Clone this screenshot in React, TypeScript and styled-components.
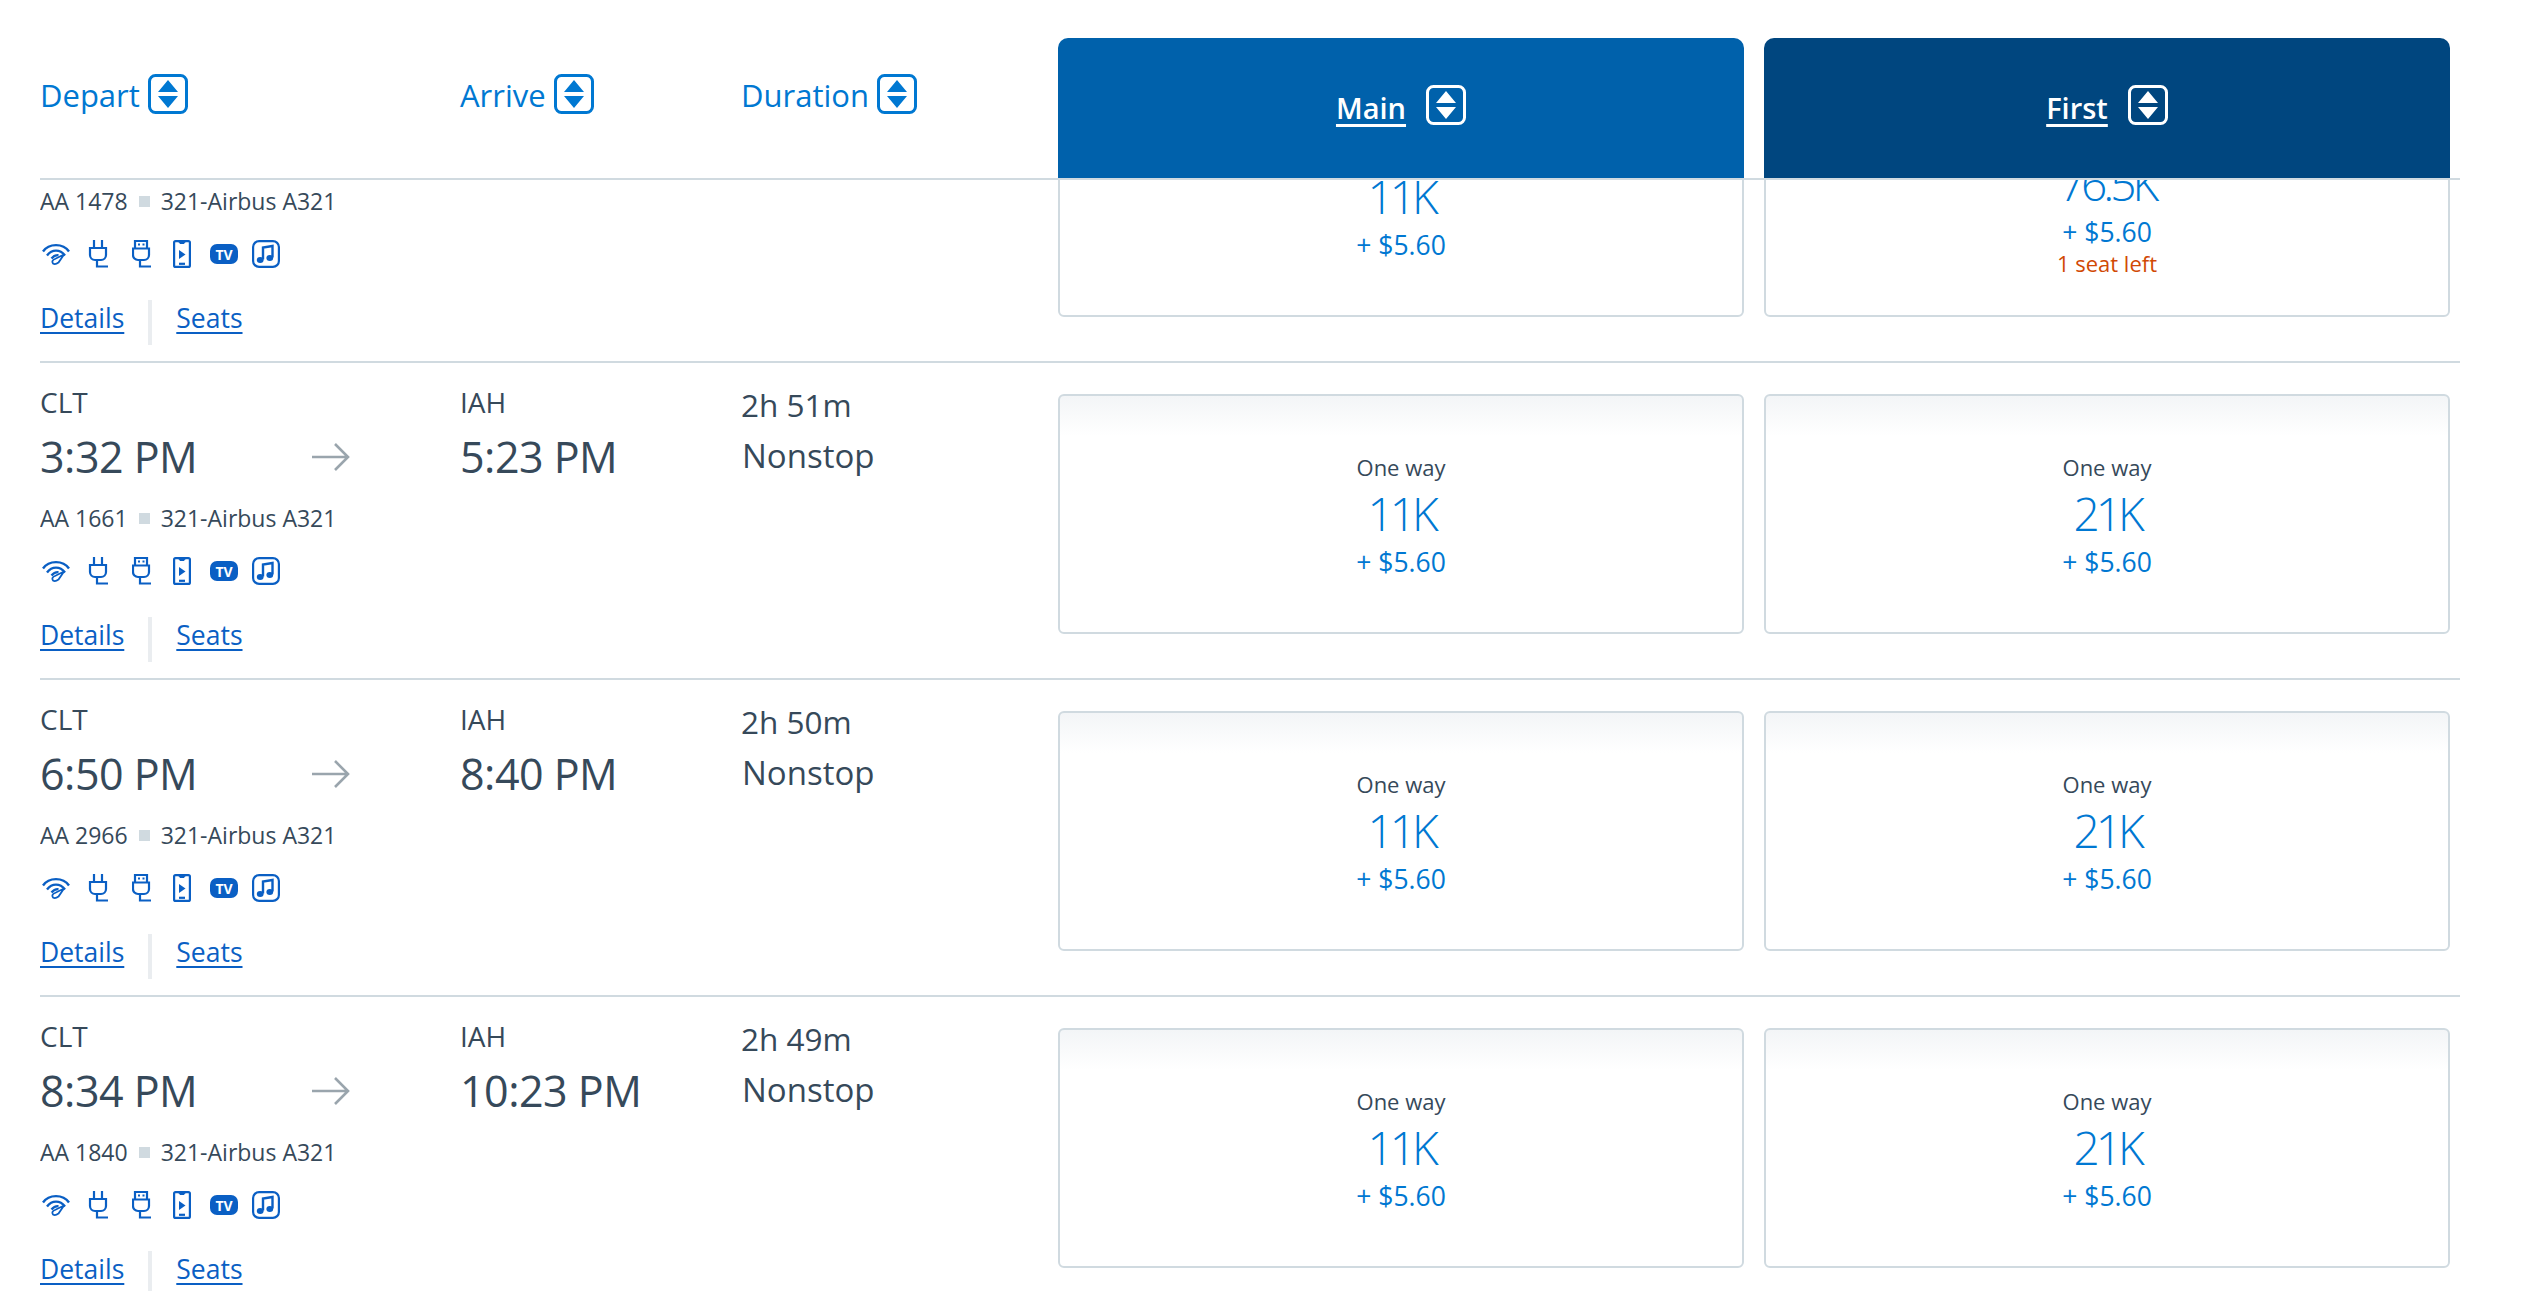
import styled, { createGlobalStyle } from 'styled-components'

const GlobalStyle = createGlobalStyle`
  html, body {
    margin: 0;
    padding: 0;
    background: #fff;
    font-family: "Open Sans", "Noto Sans", sans-serif;
    color: #36495a;
  }
`

const Page = styled.div`
  width: 2420px;
  height: 1291px;
  margin-left: 40px;
  overflow: hidden;
`

const Header = styled.div`
  display: flex;
  height: 180px;
  box-sizing: border-box;
  border-bottom: 2px solid #d0dae0;
`

const HeaderCol = styled.div<{ $width: number }>`
  display: flex;
  align-items: flex-start;
  gap: 8px;
  width: ${p => p.$width}px;
  padding-top: 74px;
  box-sizing: border-box;
  font-size: 31px;
  line-height: 42px;
  color: #0078d2;
`

const FareGroup = styled.div`
  display: flex;
  gap: 20px;
  align-items: flex-start;
`

const FareHeader = styled.div<{ $dark?: boolean }>`
  display: flex;
  align-items: center;
  justify-content: center;
  gap: 20px;
  width: 686px;
  height: 140px;
  margin-top: 38px;
  padding-bottom: 6px;
  box-sizing: border-box;
  border-radius: 10px 10px 0 0;
  background: ${p => (p.$dark ? '#00467f' : '#0061ab')};
  color: #fff;
`

const FareTitle = styled.span`
  font-size: 29px;
  font-weight: 600;
  line-height: 40px;
  margin-top: 6px;
  text-decoration: underline;
  text-decoration-thickness: 3px;
  text-underline-offset: 5px;
`

const Viewport = styled.div`
  height: 1111px;
  overflow: hidden;
`

const FlightRow = styled.div<{ $clipped?: boolean }>`
  display: flex;
  height: 317px;
  box-sizing: border-box;
  border-bottom: 2px solid #d0dae0;
  margin-top: ${p => (p.$clipped ? '-134px' : '0')};
`

const DepartCol = styled.div`
  width: 420px;
  padding-top: 21px;
  box-sizing: border-box;
`

const ArriveCol = styled.div`
  width: 281px;
  padding-top: 21px;
  box-sizing: border-box;
`

const DurationCol = styled.div`
  width: 317px;
  padding-top: 22px;
  box-sizing: border-box;
`

const Airport = styled.div`
  height: 36px;
  font-size: 28px;
  line-height: 36px;
`

const TimeRow = styled.div`
  display: grid;
  grid-template-columns: 272px auto;
  align-items: center;
  margin-top: 9px;
  height: 56px;
`

const Time = styled.div`
  font-size: 43px;
  line-height: 56px;
  letter-spacing: -0.5px;
  white-space: nowrap;
`

const ArriveTime = styled(Time)`
  margin-top: 9px;
`

const FlightInfo = styled.div`
  display: flex;
  align-items: center;
  gap: 11px;
  margin-top: 17px;
  font-size: 23px;
  line-height: 32px;
`

const Dot = styled.span`
  width: 11px;
  height: 11px;
  background: #d0dae0;
`

const Amenities = styled.div`
  display: flex;
  align-items: center;
  height: 28px;
  margin-top: 23px;
  color: #0a5fc4;
`

const TvBadge = styled.span`
  display: flex;
  align-items: center;
  justify-content: center;
  width: 28px;
  height: 20px;
  margin: 0 14px 0 19px;
  border-radius: 7px;
  background: #0a5fc4;
  color: #fff;
  font-size: 14px;
  font-weight: 700;
`

const Links = styled.div`
  display: flex;
  align-items: flex-start;
  height: 45px;
  margin-top: 32px;
`

const LinkText = styled.a`
  font-size: 26.5px;
  line-height: 36px;
  color: #0a5fc4;
  text-decoration: underline;
  text-decoration-thickness: 2px;
  text-underline-offset: 4px;
`

const LinkDivider = styled.span`
  width: 4px;
  height: 45px;
  margin: 0 24px;
  background: #eaedf0;
`

const DurationText = styled.div`
  height: 40px;
  font-size: 31.5px;
  line-height: 40px;
`

const StopsText = styled(DurationText)`
  margin-top: 11px;
  margin-left: 1px;
  font-size: 33px;
`

const FareCard = styled.div`
  display: flex;
  flex-direction: column;
  align-items: center;
  justify-content: center;
  width: 686px;
  height: 240px;
  margin-top: 31px;
  padding-top: 3px;
  box-sizing: border-box;
  border: 2px solid #d0dae0;
  border-radius: 6px;
  background: linear-gradient(#f3f5f7, #fff 40px);
`

const OneWay = styled.div`
  height: 30px;
  font-size: 22px;
  line-height: 30px;
`

const Miles = styled.div`
  font-size: 46px;
  font-weight: 300;
  line-height: 52px;
  letter-spacing: -4px;
  margin-top: 5px;
  color: #0078d2;
`

const Taxes = styled.div`
  font-size: 26.5px;
  line-height: 36px;
  margin-top: 5px;
  color: #0078d2;
`

const SeatsLeft = styled.div`
  font-size: 22px;
  line-height: 26px;
  color: #d14904;
`

function SortIcon() {
  return (
    <svg width="40" height="40" viewBox="0 0 40 40" style={{ flex: 'none' }}>
      <rect x="1.5" y="1.5" width="37" height="37" rx="6" fill="none" stroke="currentColor" strokeWidth="3" />
      <path d="M20 6 L30 18 H10 Z M10 22 H30 L20 34 Z" fill="currentColor" />
    </svg>
  )
}

function WifiIcon() {
  return (
    <svg width="28" height="22" viewBox="0 0 28 22" fill="none" stroke="currentColor" strokeWidth="2.4" style={{ marginLeft: 2 }}>
      <path d="M1 8.5 C7 0 21 0 27 8.5" />
      <path d="M5 12.5 C10 6 18 6 23 12.5" />
      <path d="M9.5 15.5 C11.5 13 14 12 16.5 12.2" />
      <path d="M11 20.5 C9.5 18.5 11 16.5 13 16 L22 11.5 L16.5 19.5 C14.5 21 12.5 21.5 11 20.5 Z" strokeWidth="1.8" />
    </svg>
  )
}

function PlugIcon() {
  return (
    <svg width="21" height="28" viewBox="0 0 21 28" fill="none" stroke="currentColor" strokeWidth="2.2" style={{ marginLeft: 18 }}>
      <path d="M6 0 V7 M14 0 V7" />
      <path d="M2 8 H18 V15 A5 5 0 0 1 13 20 H7 A5 5 0 0 1 2 15 Z" />
      <path d="M9 20 V26.5 H20" />
    </svg>
  )
}

function UsbIcon() {
  return (
    <svg width="19" height="28" viewBox="0 0 19 28" fill="none" stroke="currentColor" strokeWidth="2.2" style={{ marginLeft: 23 }}>
      <path d="M3 8 V1 H15 V8" />
      <path d="M6 4.5 H8 M10.5 4.5 H12.5" />
      <path d="M1 8.5 H17 V15 A5 5 0 0 1 12 20 H6 A5 5 0 0 1 1 15 Z" />
      <path d="M8 20 V26.5 H19" />
    </svg>
  )
}

function PhoneIcon() {
  return (
    <svg width="18" height="28" viewBox="0 0 18 28" fill="none" stroke="currentColor" strokeWidth="2.2" style={{ marginLeft: 22 }}>
      <rect x="1.1" y="1.1" width="15.8" height="25.8" rx="1.5" />
      <path d="M5.5 1.5 H12.5 L11 3.5 H7 Z" fill="currentColor" strokeWidth="1" />
      <path d="M6 10 L12.5 14.5 L6 19 Z" fill="currentColor" stroke="none" />
      <path d="M6 23.8 H12" />
    </svg>
  )
}

function MusicIcon() {
  return (
    <svg width="28" height="28" viewBox="0 0 28 28" fill="none" stroke="currentColor" strokeWidth="2.2">
      <rect x="1.1" y="1.1" width="25.8" height="25.8" rx="6" />
      <path d="M11 19.5 V7.5 L20.5 6 V17.5" strokeWidth="2.4" />
      <ellipse cx="8.2" cy="20" rx="3.4" ry="2.9" fill="currentColor" stroke="none" />
      <ellipse cx="17.8" cy="18" rx="3.4" ry="2.9" fill="currentColor" stroke="none" />
    </svg>
  )
}

function ArrowIcon() {
  return (
    <svg width="38" height="28" viewBox="0 0 38 28" fill="none" stroke="#9aa5ad" strokeWidth="2.6">
      <path d="M0 14 H36 M23 1 L36 14 L23 27" />
    </svg>
  )
}

interface Fare {
  miles: string
  label?: string
  seats?: string
}

interface Flight {
  from?: string
  to?: string
  depart?: string
  arrive?: string
  number: string
  duration?: string
  stops?: string
  main: Fare
  first: Fare
}

// the first row sits scrolled under the header, only its lower part shows
const flights: Flight[] = [
  {
    number: 'AA 1478',
    main: { miles: '11K' },
    first: { miles: '76.5K', seats: '1 seat left' },
  },
  {
    from: 'CLT',
    to: 'IAH',
    depart: '3:32 PM',
    arrive: '5:23 PM',
    number: 'AA 1661',
    duration: '2h 51m',
    stops: 'Nonstop',
    main: { label: 'One way', miles: '11K' },
    first: { label: 'One way', miles: '21K' },
  },
  {
    from: 'CLT',
    to: 'IAH',
    depart: '6:50 PM',
    arrive: '8:40 PM',
    number: 'AA 2966',
    duration: '2h 50m',
    stops: 'Nonstop',
    main: { label: 'One way', miles: '11K' },
    first: { label: 'One way', miles: '21K' },
  },
  {
    from: 'CLT',
    to: 'IAH',
    depart: '8:34 PM',
    arrive: '10:23 PM',
    number: 'AA 1840',
    duration: '2h 49m',
    stops: 'Nonstop',
    main: { label: 'One way', miles: '11K' },
    first: { label: 'One way', miles: '21K' },
  },
]

function FareBox({ fare }: { fare: Fare }) {
  return (
    <FareCard>
      <OneWay>{fare.label}</OneWay>
      <Miles>{fare.miles}</Miles>
      <Taxes>+ $5.60</Taxes>
      {fare.seats && <SeatsLeft>{fare.seats}</SeatsLeft>}
    </FareCard>
  )
}

export default function App(): JSX.Element {
  return (
    <Page>
      <GlobalStyle />
      <Header>
        <HeaderCol $width={420}>Depart <SortIcon /></HeaderCol>
        <HeaderCol $width={281}>Arrive <SortIcon /></HeaderCol>
        <HeaderCol $width={317}>Duration <SortIcon /></HeaderCol>
        <FareGroup>
          <FareHeader>
            <FareTitle>Main</FareTitle>
            <SortIcon />
          </FareHeader>
          <FareHeader $dark>
            <FareTitle>First</FareTitle>
            <SortIcon />
          </FareHeader>
        </FareGroup>
      </Header>
      <Viewport>
        {flights.map((flight, i) => (
          <FlightRow key={flight.number} $clipped={i === 0}>
            <DepartCol>
              <Airport>{flight.from}</Airport>
              <TimeRow>
                <Time>{flight.depart}</Time>
                <ArrowIcon />
              </TimeRow>
              <FlightInfo>
                {flight.number}
                <Dot />
                321-Airbus A321
              </FlightInfo>
              <Amenities>
                <WifiIcon />
                <PlugIcon />
                <UsbIcon />
                <PhoneIcon />
                <TvBadge>TV</TvBadge>
                <MusicIcon />
              </Amenities>
              <Links>
                <LinkText>Details</LinkText>
                <LinkDivider />
                <LinkText>Seats</LinkText>
              </Links>
            </DepartCol>
            <ArriveCol>
              <Airport>{flight.to}</Airport>
              <ArriveTime>{flight.arrive}</ArriveTime>
            </ArriveCol>
            <DurationCol>
              <DurationText>{flight.duration}</DurationText>
              <StopsText>{flight.stops}</StopsText>
            </DurationCol>
            <FareGroup>
              <FareBox fare={flight.main} />
              <FareBox fare={flight.first} />
            </FareGroup>
          </FlightRow>
        ))}
      </Viewport>
    </Page>
  )
}
